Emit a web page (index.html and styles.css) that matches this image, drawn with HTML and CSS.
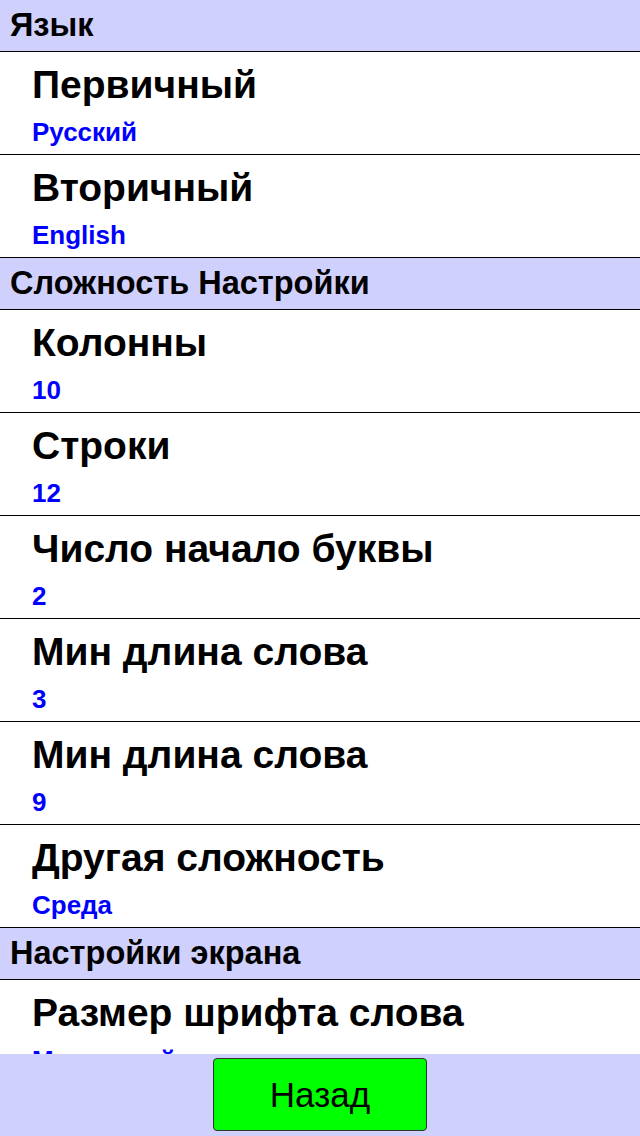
FILE: index.html
```html
<!DOCTYPE html>
<html lang="ru">
<head>
    <meta charset="UTF-8">
    <title>Настройки</title>
    <link rel="stylesheet" href="styles.css">
</head>
<body>

<div class="settings">
    <div class="section">Язык</div>
    <div class="item">
        <div class="item-title">Первичный</div>
        <div class="item-value">Русский</div>
    </div>
    <div class="item">
        <div class="item-title">Вторичный</div>
        <div class="item-value">English</div>
    </div>

    <div class="section">Сложность Настройки</div>
    <div class="item">
        <div class="item-title">Колонны</div>
        <div class="item-value">10</div>
    </div>
    <div class="item">
        <div class="item-title">Строки</div>
        <div class="item-value">12</div>
    </div>
    <div class="item">
        <div class="item-title">Число начало буквы</div>
        <div class="item-value">2</div>
    </div>
    <div class="item">
        <div class="item-title">Мин длина слова</div>
        <div class="item-value">3</div>
    </div>
    <div class="item">
        <div class="item-title">Мин длина слова</div>
        <div class="item-value">9</div>
    </div>
    <div class="item">
        <div class="item-title">Другая сложность</div>
        <div class="item-value">Среда</div>
    </div>

    <div class="section">Настройки экрана</div>
    <div class="item">
        <div class="item-title">Размер шрифта слова</div>
        <div class="item-value">Маленький</div>
    </div>
</div>

<div class="footer">
    <button type="button">Назад</button>
</div>

</body>
</html>
```

FILE: styles.css
```css
html, body {
    margin: 0;
    height: 100%;
}
body {
    font-family: "Liberation Sans", Arial, sans-serif;
    background-color: #fff;
    display: flex;
    flex-direction: column;
    overflow: hidden;
}
.settings {
    flex: 1;
    overflow: hidden;
}
.section {
    background-color: #d0d0fc;
    color: #000;
    font-size: 32.5px;
    font-weight: bold;
    line-height: 51px;
    padding-left: 10px;
    border-bottom: 1px solid #000;
}
.item {
    padding: 7px 0 7px 32px;
    border-bottom: 1px solid #000;
}
.item-title {
    font-size: 39px;
    font-weight: bold;
    line-height: 52px;
    color: #000;
}
.item-value {
    font-size: 26px;
    font-weight: bold;
    line-height: 30px;
    margin-top: 6px;
    color: #0000ff;
}
.footer {
    height: 82px;
    background-color: #d0d0fc;
    display: flex;
    justify-content: center;
    align-items: flex-start;
    padding-top: 4px;
    box-sizing: border-box;
}
button {
    width: 214px;
    height: 73px;
    background-color: #00ff00;
    border: 1px solid #333;
    border-radius: 4px;
    font-family: "Liberation Sans", Arial, sans-serif;
    font-size: 35px;
    color: #000;
    padding: 0;
}
```
